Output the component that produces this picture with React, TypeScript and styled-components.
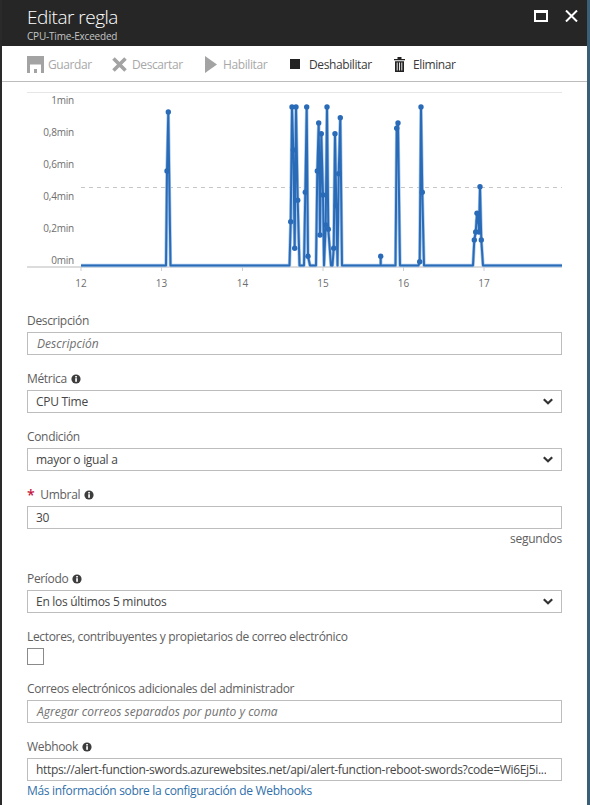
import React from "react";
import styled, { createGlobalStyle } from "styled-components";

const Global = createGlobalStyle`
  html, body { margin: 0; padding: 0; background: #3a6078; }
  body { font-family: "Open Sans", "Noto Sans", "Liberation Sans", sans-serif; }
  * { box-sizing: border-box; }
`;

const Blade = styled.div`
  width: 587px;
  height: 805px;
  overflow: hidden;
  background: #fff;
  border-left: 2px solid #2a2a2a;
  display: flex;
  flex-direction: column;
`;
const Header = styled.header`
  height: 46px;
  flex: none;
  margin-left: -2px;
  background: #262626;
  padding: 6px 9px 0 27px;
  display: flex;
  justify-content: space-between;
`;
const TitleBlock = styled.div`
  display: flex;
  flex-direction: column;
  color: #fff;
`;
const Title = styled.div`
  font-size: 19px;
  line-height: 23px;
  letter-spacing: -0.5px;
  font-weight: 300;
`;
const Subtitle = styled.div`
  font-size: 10px;
  line-height: 13px;
  letter-spacing: -0.2px;
  color: #c4c4c4;
  margin-top: 1px;
`;
const WindowButtons = styled.div`
  display: flex;
  gap: 17px;
  padding-top: 4px;
`;
const Toolbar = styled.div`
  height: 36px;
  flex: none;
  padding: 1px 0 0 25px;
  display: flex;
  align-items: center;
  border-bottom: 1px solid #bdbdbd;
`;
const ToolButton = styled.div<{ $off?: boolean; $w: number; $gap: number }>`
  display: flex;
  align-items: center;
  width: ${(p) => p.$w}px;
  gap: ${(p) => p.$gap}px;
  font-size: 12px;
  letter-spacing: -0.4px;
  color: ${(p) => (p.$off ? "#a8a8a8" : "#3a3a3a")};
  svg { flex: none; }
`;
const ChartWrap = styled.div`
  flex: none;
  margin: 10px 0 0 25px;
  height: 219px;
  svg { display: block; }
`;
const Form = styled.div`
  padding: 0 25px;
  display: flex;
  flex-direction: column;
  gap: 14px;
`;
const Field = styled.div`
  display: flex;
  flex-direction: column;
`;
const Label = styled.div`
  height: 21px;
  font-size: 12px;
  line-height: 19px;
  letter-spacing: -0.33px;
  color: #5e5e5e;
  display: flex;
  align-items: flex-start;
  gap: 4px;
`;
const Star = styled.span`
  color: #c4143c;
  font-size: 14px;
  font-weight: 600;
  margin-right: 2px;
`;
const InfoIcon = styled.svg`
  margin-top: 5px;
`;
const Control = styled.div<{ $placeholder?: boolean }>`
  height: 23px;
  border: 1px solid #bdbdbd;
  padding: 0 8px 0 ${(p) => (p.$placeholder ? 9 : 8)}px;
  font-size: 12px;
  line-height: 21px;
  letter-spacing: ${(p) => (p.$placeholder ? "0.02px" : "-0.28px")};
  color: ${(p) => (p.$placeholder ? "#707070" : "#464646")};
  font-style: ${(p) => (p.$placeholder ? "italic" : "normal")};
  white-space: nowrap;
  overflow: hidden;
  display: flex;
  align-items: center;
  justify-content: space-between;
`;
const Unit = styled.div`
  height: 26px;
  text-align: right;
  font-size: 12px;
  line-height: 20px;
  letter-spacing: -0.25px;
  color: #5e5e5e;
`;
const Check = styled.div`
  width: 17px;
  height: 17px;
  border: 1px solid #8a8a8a;
`;
const HelpLink = styled.a`
  font-size: 12px;
  line-height: 20px;
  letter-spacing: -0.31px;
  color: #2f70aa;
  text-decoration: none;
`;
const UrlText = styled.span`
  overflow: hidden;
  text-overflow: ellipsis;
  letter-spacing: -0.33px;
`;

const Info = () => (
  <InfoIcon width="10" height="10" viewBox="0 0 10 10">
    <circle cx="5" cy="5" r="4.6" fill="#3d3d3d" />
    <rect x="4.2" y="4.2" width="1.7" height="3.6" fill="#fff" />
    <rect x="4.2" y="2" width="1.7" height="1.5" fill="#fff" />
  </InfoIcon>
);
const Chevron = () => (
  <svg width="10" height="7" viewBox="0 0 10 7">
    <path d="M0.8 1.2 L5 5.3 L9.2 1.2" fill="none" stroke="#333" strokeWidth="2.2" />
  </svg>
);

const Z = 265.5;
const segments: [number, number][][] = [
  [[166, Z], [167, 171], [168.3, 112], [170.5, Z]],
  [[289.5, Z], [290.7, 221.7], [292, 107], [293.3, 150], [294.7, 248.3], [296, 107], [297.7, 200.3], [299.5, Z]],
  [[304, Z], [305.3, 192.3], [306.7, 107], [308, 256.3], [310, Z]],
  [[316, Z], [317.3, 171], [318.7, 123], [320, 235], [321.3, 133.7], [323, 195], [324, Z], [325.7, 225], [327, 107], [328.3, 229.3], [331, Z]],
  [[332.5, Z], [333.7, 248.3], [335, 133.7], [336.3, 205.7], [337.5, Z], [338.7, 173.7], [340.3, 117.7], [342, Z]],
  [[380.7, Z], [380.7, 256.3], [380.7, Z]],
  [[395.5, Z], [396.7, 128.3], [398, 123], [400, Z]],
  [[418.5, Z], [419.7, 261.7], [421, 107], [422.3, 192.3], [424, Z]],
  [[473, Z], [474.3, 240], [475.7, 232], [477, 213.3], [478.3, 221], [479, 232], [480, 186.7], [481.3, 240], [483, Z]],
];
let linePts = "81,265.5";
segments.forEach((s) => {
  s.forEach(([x, y]) => { linePts += ` ${x},${y}`; });
});
linePts += " 562,265.5";
const dots = segments.flat().filter(([, y]) => y !== Z);
const yLabels = [["1min", 104], ["0,8min", 136], ["0,6min", 168], ["0,4min", 200], ["0,2min", 232], ["0min", 264]] as const;
const xTicks = [["12", 81], ["13", 161.5], ["14", 242.5], ["15", 323], ["16", 403.5], ["17", 484]] as const;

const Chart = () => (
  <svg width="535" height="205" viewBox="27 92 535 205" fontFamily='"Open Sans", sans-serif'>
    <line x1="27" x2="562" y1="92.5" y2="92.5" stroke="#e6e6e6" />
    <line x1="27" x2="562" y1="267" y2="267" stroke="#dcdcdc" strokeWidth="2" />
    <line x1="81" x2="562" y1="187.5" y2="187.5" stroke="#c6c6c6" strokeDasharray="4 4" />
    {yLabels.map(([t, y]) => (
      <text key={t} x="74" y={y} textAnchor="end" fontSize="10" letterSpacing="-0.2" fill="#6e6e6e">{t}</text>
    ))}
    {xTicks.map(([t, x]) => (
      <g key={t}>
        <line x1={x} x2={x} y1="267" y2="271" stroke="#cfcfcf" />
        <text x={x} y="286.5" textAnchor="middle" fontSize="10" fill="#6e6e6e">{t}</text>
      </g>
    ))}
    <polyline points={linePts} fill="none" stroke="#a9c8ea" strokeWidth="3.4" strokeLinejoin="round" />
    <polyline points={linePts} fill="none" stroke="#2a6bb8" strokeWidth="2" strokeLinejoin="round" />
    {dots.map(([x, y], i) => (
      <circle key={i} cx={x} cy={y} r="2.7" fill="#2a6bb8" />
    ))}
  </svg>
);

export default function App() {
  return (
    <>
      <Global />
      <Blade>
        <Header>
          <TitleBlock>
            <Title>Editar regla</Title>
            <Subtitle>CPU-Time-Exceeded</Subtitle>
          </TitleBlock>
          <WindowButtons>
            <svg width="14" height="12" viewBox="0 0 14 12">
              <path d="M0 0 H14 V12 H0 Z M2 3 V10 H12 V3 Z" fill="#fff" fillRule="evenodd" />
            </svg>
            <svg width="13" height="12" viewBox="0 0 13 12">
              <path d="M1 0.5 L12 11.5 M12 0.5 L1 11.5" stroke="#fff" strokeWidth="2" />
            </svg>
          </WindowButtons>
        </Header>
        <Toolbar>
          <ToolButton $off $w={85} $gap={4}>
            <svg width="17" height="17" viewBox="0 0 17 17">
              <path d="M0 0 H17 V17 H14 V8.5 H3 V17 H0 Z M7 13 H10 V17 H7 Z" fill="#a3a3a3" />
            </svg>
            Guardar
          </ToolButton>
          <ToolButton $off $w={93} $gap={5}>
            <svg width="15" height="15" viewBox="0 0 15 15">
              <path d="M1.5 1.5 L13.5 13.5 M13.5 1.5 L1.5 13.5" stroke="#a3a3a3" strokeWidth="3.6" />
            </svg>
            Descartar
          </ToolButton>
          <ToolButton $off $w={85} $gap={6}>
            <svg width="12" height="17" viewBox="0 0 12 17">
              <path d="M0 0 L12 8.5 L0 17 Z" fill="#a3a3a3" />
            </svg>
            Habilitar
          </ToolButton>
          <ToolButton $w={104} $gap={9}>
            <svg width="10" height="10" viewBox="0 0 10 10">
              <rect width="10" height="10" fill="#222" />
            </svg>
            Deshabilitar
          </ToolButton>
          <ToolButton $w={70} $gap={8}>
            <svg width="11" height="15" viewBox="0 0 11 15">
              <path d="M0 2 H11 V3.3 H0 Z M3.5 0 H7.5 V2 H3.5 Z M1 4.2 H10 V15 H1 Z" fill="#222" />
              <path d="M3.2 5.5 V13.5 M5.5 5.5 V13.5 M7.8 5.5 V13.5" stroke="#fff" strokeWidth="0.9" />
            </svg>
            Eliminar
          </ToolButton>
        </Toolbar>
        <ChartWrap>
          <Chart />
        </ChartWrap>
        <Form>
          <Field>
            <Label>Descripción</Label>
            <Control $placeholder>Descripción</Control>
          </Field>
          <Field>
            <Label>Métrica <Info /></Label>
            <Control>CPU Time<Chevron /></Control>
          </Field>
          <Field>
            <Label>Condición</Label>
            <Control>mayor o igual a<Chevron /></Control>
          </Field>
          <Field>
            <Label><Star>*</Star> Umbral <Info /></Label>
            <Control>30</Control>
            <Unit>segundos</Unit>
          </Field>
          <Field>
            <Label>Período <Info /></Label>
            <Control>En los últimos 5 minutos<Chevron /></Control>
          </Field>
          <Field>
            <Label>Lectores, contribuyentes y propietarios de correo electrónico</Label>
            <Check />
          </Field>
          <Field>
            <Label>Correos electrónicos adicionales del administrador</Label>
            <Control $placeholder>Agregar correos separados por punto y coma</Control>
          </Field>
          <Field>
            <Label>Webhook <Info /></Label>
            <Control><UrlText>https://alert-function-swords.azurewebsites.net/api/alert-function-reboot-swords?code=Wi6Ej5i...</UrlText></Control>
            <HelpLink>Más información sobre la configuración de Webhooks</HelpLink>
          </Field>
        </Form>
      </Blade>
    </>
  );
}
